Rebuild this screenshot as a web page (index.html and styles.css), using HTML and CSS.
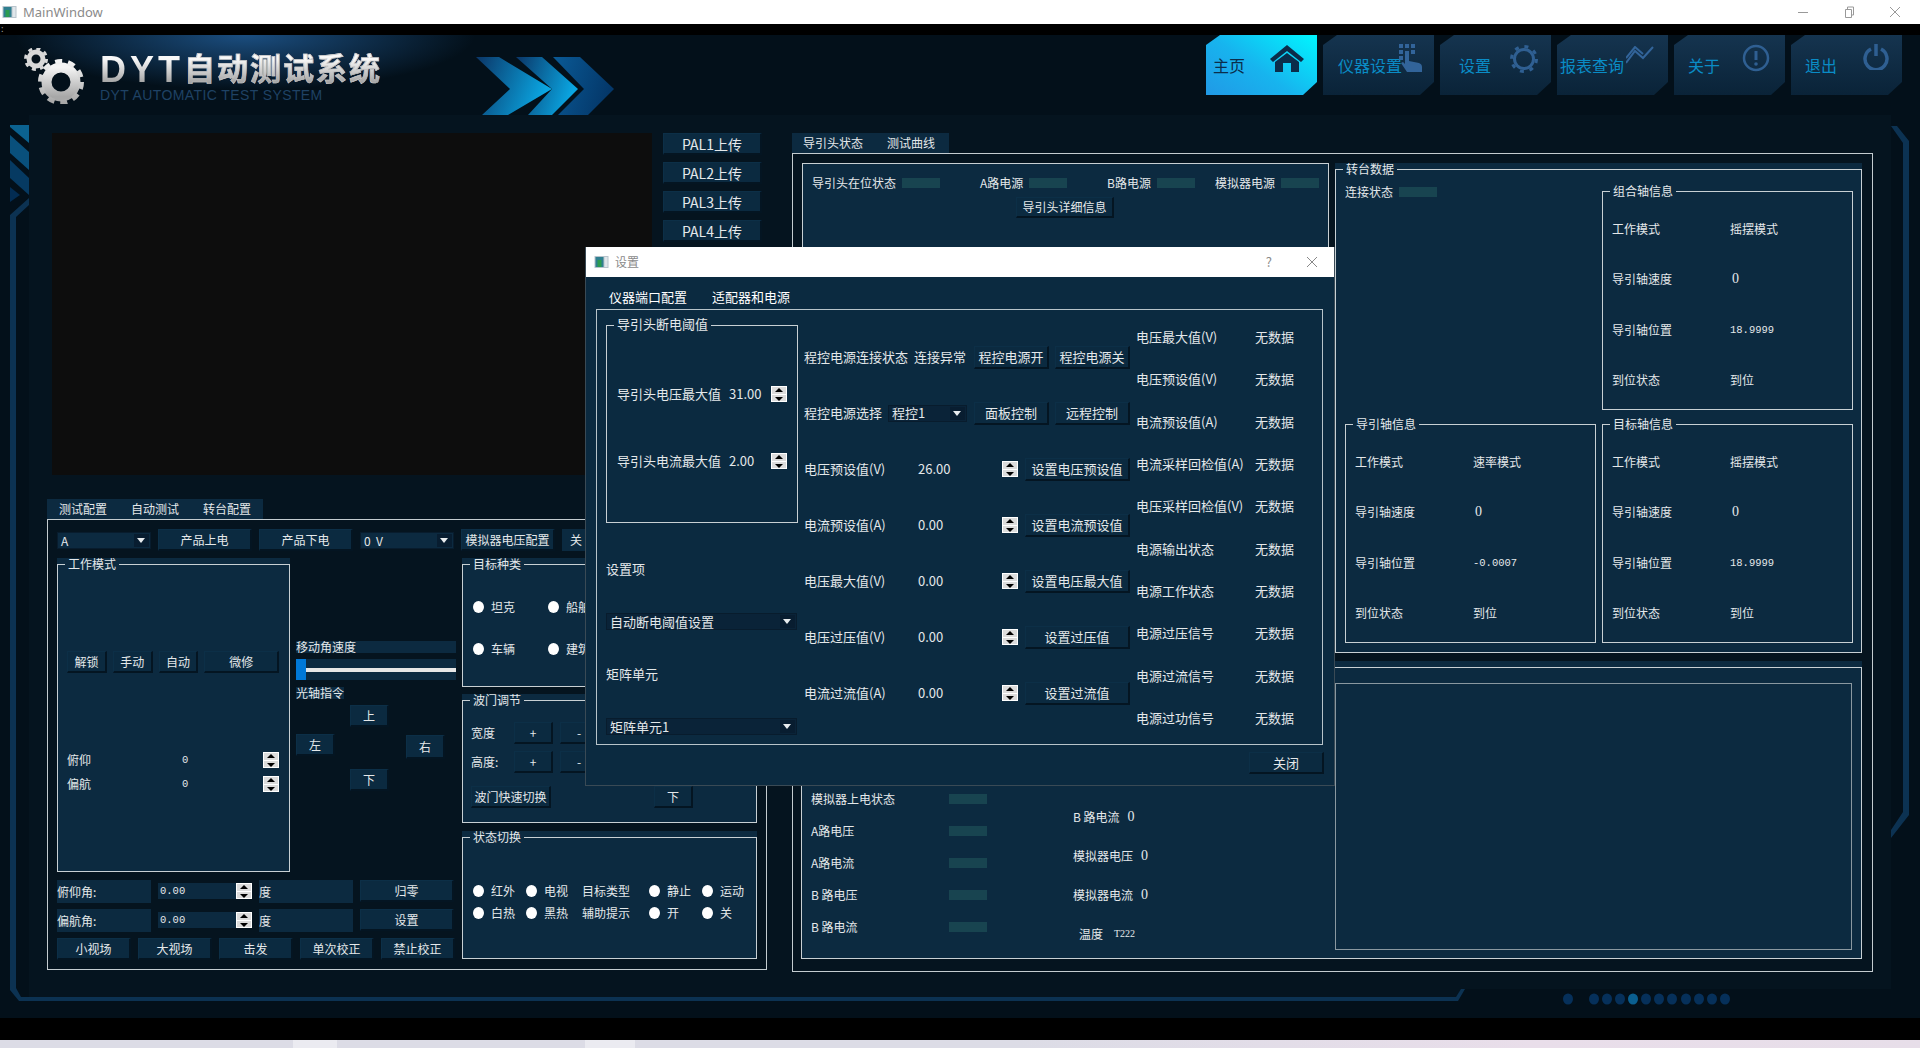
FILE: index.html
```html
<!DOCTYPE html>
<html lang="zh">
<head>
  <meta charset="UTF-8" />
  <title>MainWindow</title>
  <link rel="stylesheet" href="styles.css">
</head>
<body>
  <div class="page">
    <div class="titlebar">
      <svg class="win-icon" viewBox="0 0 14 12"><rect width="14" height="12" fill="#b8c4cc"/><rect x="1" y="1" width="8" height="10" fill="#2f7f8f"/><rect x="3" y="4" width="4" height="7" fill="#2c9c4f"/><rect x="10" y="1" width="3" height="10" fill="#dfe6ea"/></svg>
      <span class="win-title">MainWindow</span>
      <div class="win-ctrls">
        <svg viewBox="0 0 12 12"><path d="M1 6.5h10" stroke="#999" fill="none"/></svg>
        <svg viewBox="0 0 12 12"><path d="M2.5 3.5h6v8h-6zM4.5 3.5v-2.500h6v8h-2" stroke="#999" fill="none"/></svg>
        <svg viewBox="0 0 12 12"><path d="M1 1l10 10M11 1L1 11" stroke="#999" fill="none"/></svg>
      </div>
    </div>
    <div class="menubar">:</div>

    <div class="app">
      <svg class="deco" viewBox="0 35 1920 983">
        <rect x="29" y="115" width="1862" height="874" fill="#05141f"/>
        <polygon points="29,989 29,1001 1456,1001 1465,989" fill="#05141f"/>
        <polygon points="10,125 29,125 29,143 10,127" fill="#0b6290"/>
        <polygon points="10,135 29,152 29,170 10,153" fill="#09507c"/>
        <polygon points="10,160 29,178 29,195 10,178" fill="#063a62"/>
        <polygon points="10,187 20,195 10,202" fill="#032c52"/>
        <polygon points="29,198 29,205 16,217 16,988 21,997 1456,997 1461,989 1465,989 1458,1001 19,1001 10,990 10,215" fill="#0c3252"/>
        <polygon points="1891,126 1897,126 1909,141 1909,815 1891,838 1891,830 1903,812 1903,143" fill="#0c3252"/>
        <g fill="#06305a">
          <ellipse cx="1568" cy="999" rx="5" ry="5.500"/><ellipse cx="1594" cy="999" rx="5" ry="5.500"/><ellipse cx="1607" cy="999" rx="5" ry="5.500"/><ellipse cx="1620" cy="999" rx="5" ry="5.500"/>
          <ellipse cx="1633" cy="999" rx="5" ry="5.500" fill="#0a5f90"/>
          <ellipse cx="1646" cy="999" rx="5" ry="5.500"/><ellipse cx="1659" cy="999" rx="5" ry="5.500"/><ellipse cx="1672" cy="999" rx="5" ry="5.500"/><ellipse cx="1686" cy="999" rx="5" ry="5.500"/><ellipse cx="1699" cy="999" rx="5" ry="5.500"/><ellipse cx="1712" cy="999" rx="5" ry="5.500"/><ellipse cx="1725" cy="999" rx="5" ry="5.500"/>
        </g>
      </svg>

      <header class="header">
        <svg class="gears" viewBox="0 0 62 56">
          <defs><linearGradient id="metal" x1="0" y1="0" x2="0" y2="1"><stop offset="0" stop-color="#f4f4f4"/><stop offset="1" stop-color="#a8a8a8"/></linearGradient></defs>
          <circle cx="37" cy="34" r="14.500" fill="none" stroke="url(#metal)" stroke-width="10"/>
          <circle cx="37" cy="34" r="20.500" fill="none" stroke="url(#metal)" stroke-width="5" stroke-dasharray="7 5.880"/>
          <circle cx="12" cy="11" r="7" fill="none" stroke="#d8d8d8" stroke-width="5"/>
          <circle cx="12" cy="11" r="10.500" fill="none" stroke="#d8d8d8" stroke-width="3" stroke-dasharray="4 4.250"/>
        </svg>
        <div class="brand">
          <div class="brand-name">DYT<span>自动测试系统</span></div>
          <div class="brand-sub">DYT AUTOMATIC TEST SYSTEM</div>
        </div>
        <svg class="chevrons" viewBox="0 0 138 58">
          <defs>
            <linearGradient id="chev" x1="0" y1="0" x2="1" y2="0.300"><stop offset="0" stop-color="#0b3566"/><stop offset="1" stop-color="#0aa6e2"/></linearGradient>
            <linearGradient id="chev-back" x1="0" y1="0" x2="1" y2="0.300"><stop offset="0" stop-color="#0a5a96"/><stop offset="1" stop-color="#04386a"/></linearGradient>
          </defs>
          <polygon points="77,0 104,0 138,32 112,58 82,58 108,32" fill="url(#chev-back)"/>
          <polygon points="40,0 66,0 102,32 76,58 52,58 76,32" fill="url(#chev)"/>
          <polygon points="0,0 23,0 76,32 32,58 6,58 34,32" fill="url(#chev)"/>
        </svg>
        <nav class="nav">
          <a class="nav-btn active t-home">主页
            <svg class="nav-icon i-home" viewBox="0 0 36 28"><path d="M18 1L1 15l3 3L18 7l14 11 3-3z" fill="#0b2d4a"/><path d="M6 18l12-9 12 9v10h-8v-9h-8v9H6z" fill="#0b2d4a"/></svg>
          </a>
          <a class="nav-btn t-inst">仪器设置
            <svg class="nav-icon i-hand" viewBox="0 0 24 28"><g fill="#32649a"><rect x="1" y="0" width="4" height="4"/><rect x="7" y="0" width="4" height="4"/><rect x="13" y="0" width="4" height="4"/><rect x="1" y="6" width="4" height="4"/><rect x="13" y="6" width="4" height="4"/><rect x="1" y="12" width="4" height="4"/><path d="M7 7h4v10l10 2q3 1 3 4v5H9l-6-9 2-1 2 2z"/></g></svg>
          </a>
          <a class="nav-btn t-set">设置
            <svg class="nav-icon i-gear" viewBox="0 0 30 32"><circle cx="15" cy="16" r="9.500" fill="none" stroke="#2f5f92" stroke-width="3"/><circle cx="15" cy="16" r="12.500" fill="none" stroke="#2f5f92" stroke-width="3" stroke-dasharray="4 5.820"/></svg>
          </a>
          <a class="nav-btn t-rep">报表查询
            <svg class="nav-icon i-chart" viewBox="0 0 28 18"><path d="M0 17L9 5l8 7L27 1M0 12L9 1l8 7" fill="none" stroke="#32649a" stroke-width="2"/></svg>
          </a>
          <a class="nav-btn t-about">关于
            <svg class="nav-icon i-alert" viewBox="0 0 28 28"><circle cx="14" cy="14" r="12" fill="none" stroke="#2f5f92" stroke-width="2.500"/><path d="M14 7v9" stroke="#2f5f92" stroke-width="3"/><circle cx="14" cy="20" r="1.800" fill="#2f5f92"/></svg>
          </a>
          <a class="nav-btn t-exit">退出
            <svg class="nav-icon i-power" viewBox="0 0 26 26"><path d="M8 5a11 11 0 1 0 10 0" fill="none" stroke="#2f5f92" stroke-width="3.500"/><path d="M13 0v12" stroke="#2f5f92" stroke-width="3.500"/></svg>
          </a>
        </nav>
      </header>

      <main class="body">
        <section class="left-col">
          <div class="video-row">
            <div class="video"></div>
            <div class="pal-col">
              <button class="btn pal">PAL1上传</button>
              <button class="btn pal">PAL2上传</button>
              <button class="btn pal">PAL3上传</button>
              <button class="btn pal">PAL4上传</button>
            </div>
          </div>

          <div class="tabs tabs-left"><span>测试配置</span><span>自动测试</span><span>转台配置</span></div>
          <div class="tab-box cfg-box">
            <div class="cfg-top">
              <div class="combo combo-light"><span>A</span><i></i></div>
              <button class="btn">产品上电</button>
              <button class="btn">产品下电</button>
              <div class="combo combo-light"><span>0&nbsp;&nbsp;V</span><i></i></div>
              <button class="btn">模拟器电压配置</button>
              <div class="btn off-box">关</div>
            </div>
            <div class="cfg-main">
              <div class="cfg-left">
                <div class="cfg-upper">
                  <div class="group mode-group">
                    <fieldset>
                      <legend>工作模式</legend>
                      <div class="mode-btns">
                        <button class="btn">解锁</button>
                        <button class="btn">手动</button>
                        <button class="btn">自动</button>
                        <button class="btn wide">微修</button>
                      </div>
                      <div class="mode-row"><span class="mode-label">俯仰</span><span class="small-num">0</span><div class="spin"><i></i><i></i></div></div>
                      <div class="mode-row"><span class="mode-label">偏航</span><span class="small-num">0</span><div class="spin"><i></i><i></i></div></div>
                    </fieldset>
                  </div>
                  <div class="axis-col">
                    <div class="strip-label">移动角速度</div>
                    <div class="slider"><i class="slider-handle"></i><i class="slider-groove"></i></div>
                    <div class="strip-label short">光轴指令</div>
                    <div class="dpad">
                      <button class="btn d-up">上</button>
                      <button class="btn d-left">左</button>
                      <button class="btn d-right">右</button>
                      <button class="btn d-down">下</button>
                    </div>
                  </div>
                </div>
                <div class="angle-row">
                  <div class="strip-cell">俯仰角:</div>
                  <div class="spin-field"><span class="small-num">0.00</span><div class="spin"><i></i><i></i></div></div>
                  <div class="strip-cell">度</div>
                  <button class="btn">归零</button>
                </div>
                <div class="angle-row">
                  <div class="strip-cell">偏航角:</div>
                  <div class="spin-field"><span class="small-num">0.00</span><div class="spin"><i></i><i></i></div></div>
                  <div class="strip-cell">度</div>
                  <button class="btn">设置</button>
                </div>
                <div class="shot-row">
                  <button class="btn">小视场</button>
                  <button class="btn">大视场</button>
                  <button class="btn">击发</button>
                  <button class="btn">单次校正</button>
                  <button class="btn">禁止校正</button>
                </div>
              </div>
              <div class="cfg-right">
                <div class="group target-group">
                  <fieldset>
                    <legend>目标种类</legend>
                    <div class="target-grid">
                      <label class="radio"><i></i>坦克</label>
                      <label class="radio"><i></i>船舶</label>
                      <label class="radio"><i></i>车辆</label>
                      <label class="radio"><i></i>建筑</label>
                    </div>
                  </fieldset>
                </div>
                <div class="group gate-group">
                  <fieldset>
                    <legend>波门调节</legend>
                    <div class="gate-row"><span class="gate-label">宽度</span><button class="btn">+</button><button class="btn">-</button></div>
                    <div class="gate-row"><span class="gate-label">高度:</span><button class="btn">+</button><button class="btn">-</button></div>
                    <div class="gate-row gate-last"><button class="btn gate-fast">波门快速切换</button><button class="btn gate-down">下</button></div>
                  </fieldset>
                </div>
                <div class="group state-group">
                  <fieldset>
                    <legend>状态切换</legend>
                    <div class="state-grid">
                      <label class="radio"><i></i>红外</label>
                      <label class="radio"><i></i>电视</label>
                      <span>目标类型</span>
                      <label class="radio"><i></i>静止</label>
                      <label class="radio"><i></i>运动</label>
                      <label class="radio"><i></i>白热</label>
                      <label class="radio"><i></i>黑热</label>
                      <span>辅助提示</span>
                      <label class="radio"><i></i>开</label>
                      <label class="radio"><i></i>关</label>
                    </div>
                  </fieldset>
                </div>
              </div>
            </div>
          </div>
        </section>

        <section class="right-col">
          <div class="tabs tabs-right"><span>导引头状态</span><span>测试曲线</span></div>
          <div class="tab-box status-box">
            <div class="status-top">
              <div class="seeker-box">
                <div class="seeker-row">
                  <div class="lamp-cell cell-a"><span>导引头在位状态</span><i class="lamp"></i></div>
                  <div class="lamp-cell cell-b"><span>A路电源</span><i class="lamp"></i></div>
                  <div class="lamp-cell cell-c"><span>B路电源</span><i class="lamp"></i></div>
                  <div class="lamp-cell"><span>模拟器电源</span><i class="lamp"></i></div>
                </div>
                <button class="btn seeker-btn">导引头详细信息</button>
              </div>
              <div class="group turret-group">
                <fieldset>
                  <legend>转台数据</legend>
                  <div class="turret-grid">
                    <div class="lamp-cell"><span>连接状态</span><i class="lamp"></i></div>
                    <fieldset class="axis">
                      <legend>组合轴信息</legend>
                      <div class="axis-grid">
                        <span>工作模式</span><span>摇摆模式</span>
                        <span>导引轴速度</span><span class="big-zero">0</span>
                        <span>导引轴位置</span><span class="small-num">18.9999</span>
                        <span>到位状态</span><span>到位</span>
                      </div>
                    </fieldset>
                    <fieldset class="axis">
                      <legend>导引轴信息</legend>
                      <div class="axis-grid">
                        <span>工作模式</span><span>速率模式</span>
                        <span>导引轴速度</span><span class="big-zero">0</span>
                        <span>导引轴位置</span><span class="small-num">-0.0007</span>
                        <span>到位状态</span><span>到位</span>
                      </div>
                    </fieldset>
                    <fieldset class="axis">
                      <legend>目标轴信息</legend>
                      <div class="axis-grid">
                        <span>工作模式</span><span>摇摆模式</span>
                        <span>导引轴速度</span><span class="big-zero">0</span>
                        <span>导引轴位置</span><span class="small-num">18.9999</span>
                        <span>到位状态</span><span>到位</span>
                      </div>
                    </fieldset>
                  </div>
                </fieldset>
              </div>
            </div>
            <div class="group power-group">
              <div class="power-box">
                <div class="power-col1">
                  <div class="power-row"><span>模拟器上电状态</span><i class="lamp"></i></div>
                  <div class="power-row"><span>A路电压</span><i class="lamp"></i></div>
                  <div class="power-row"><span>A路电流</span><i class="lamp"></i></div>
                  <div class="power-row"><span>B 路电压</span><i class="lamp"></i></div>
                  <div class="power-row"><span>B 路电流</span><i class="lamp"></i></div>
                </div>
                <div class="power-col2">
                  <div class="read-row">B 路电流<span class="big-zero">0</span></div>
                  <div class="read-row">模拟器电压<span class="big-zero">0</span></div>
                  <div class="read-row">模拟器电流<span class="big-zero">0</span></div>
                  <div class="read-row temp-row">温度<span class="temp-val">T222</span></div>
                </div>
                <div class="plot-frame"></div>
              </div>
            </div>
          </div>
        </section>
      </main>
    </div>

    <div class="blackbar"></div>
    <div class="taskbar"><i class="tb-a"></i><i class="tb-light"></i><i class="tb-b"></i><i class="tb-light2"></i><i class="tb-c"></i><span class="clock">16:40</span></div>

    <!-- 设置 dialog, floats over the main window -->
    <div class="dialog">
      <div class="dlg-title">
        <svg class="win-icon" viewBox="0 0 14 12"><rect width="14" height="12" fill="#b8c4cc"/><rect x="1" y="1" width="8" height="10" fill="#2f7f8f"/><rect x="3" y="4" width="4" height="7" fill="#2c9c4f"/><rect x="10" y="1" width="3" height="10" fill="#dfe6ea"/></svg>
        <span class="dlg-name">设置</span>
        <span class="dlg-help">?</span>
        <svg class="dlg-close" viewBox="0 0 12 12"><path d="M1 1l10 10M11 1L1 11" stroke="#888" fill="none"/></svg>
      </div>
      <div class="dlg-tabs"><span>仪器端口配置</span><span>适配器和电源</span></div>
      <div class="dlg-frame">
        <div class="dlg-left">
          <fieldset class="limit-group">
            <legend>导引头断电阈值</legend>
            <div class="limit-row first"><span class="limit-label">导引头电压最大值</span><span class="limit-val">31.00</span><div class="spin"><i></i><i></i></div></div>
            <div class="limit-row"><span class="limit-label">导引头电流最大值</span><span class="limit-val">2.00</span><div class="spin"><i></i><i></i></div></div>
          </fieldset>
          <div class="left-label">设置项</div>
          <div class="combo combo-wide"><span>自动断电阈值设置</span><i></i></div>
          <div class="left-label">矩阵单元</div>
          <div class="combo combo-wide"><span>矩阵单元1</span><i></i></div>
        </div>
        <div class="dlg-mid">
          <div class="mid-row"><span class="w-conn">程控电源连接状态</span><span class="w-state">连接异常</span><button class="btn b75">程控电源开</button><button class="btn b75">程控电源关</button></div>
          <div class="mid-row"><span class="w-sel">程控电源选择</span><div class="combo combo-sel"><span>程控1</span><i></i></div><button class="btn b75">面板控制</button><button class="btn b75">远程控制</button></div>
          <div class="mid-row"><span class="w-name">电压预设值(V)</span><span class="w-val">26.00</span><div class="spin"><i></i><i></i></div><button class="btn b105">设置电压预设值</button></div>
          <div class="mid-row"><span class="w-name">电流预设值(A)</span><span class="w-val">0.00</span><div class="spin"><i></i><i></i></div><button class="btn b105">设置电流预设值</button></div>
          <div class="mid-row"><span class="w-name">电压最大值(V)</span><span class="w-val">0.00</span><div class="spin"><i></i><i></i></div><button class="btn b105">设置电压最大值</button></div>
          <div class="mid-row"><span class="w-name">电压过压值(V)</span><span class="w-val">0.00</span><div class="spin"><i></i><i></i></div><button class="btn b105">设置过压值</button></div>
          <div class="mid-row"><span class="w-name">电流过流值(A)</span><span class="w-val">0.00</span><div class="spin"><i></i><i></i></div><button class="btn b105">设置过流值</button></div>
        </div>
        <div class="dlg-right">
          <span>电压最大值(V)</span><span>无数据</span>
          <span>电压预设值(V)</span><span>无数据</span>
          <span>电流预设值(A)</span><span>无数据</span>
          <span>电流采样回检值(A)</span><span>无数据</span>
          <span>电压采样回检值(V)</span><span>无数据</span>
          <span>电源输出状态</span><span>无数据</span>
          <span>电源工作状态</span><span>无数据</span>
          <span>电源过压信号</span><span>无数据</span>
          <span>电源过流信号</span><span>无数据</span>
          <span>电源过功信号</span><span>无数据</span>
        </div>
      </div>
      <div class="dlg-foot"><button class="btn b75">关闭</button></div>
    </div>
  </div>
</body>
</html>
```

FILE: styles.css
```css
* { box-sizing: border-box; }

html, body {
  margin: 0;
  padding: 0;
  width: 1920px;
  height: 1048px;
  overflow: hidden;
  background: #000;
}

body {
  font-family: "Noto Sans CJK SC", "Liberation Mono", sans-serif;
  font-size: 12px;
  line-height: 14px;
  color: #e4e8ea;
}

.page { position: relative; width: 1920px; height: 1048px; overflow: hidden; }

button { font: inherit; color: inherit; padding: 0; }
fieldset { margin: 0; min-width: 0; }
i { display: block; }

/* window chrome */
.titlebar {
  height: 24px;
  background: #fff;
  display: flex;
  align-items: center;
  padding-left: 2px;
  color: #8a8a8a;
}
.win-icon { width: 15px; height: 12px; flex: none; }
.win-title { font-family: "Noto Sans", sans-serif; font-size: 13px; margin-left: 6px; }
.win-ctrls { margin-left: auto; display: flex; gap: 34px; padding-right: 19px; }
.win-ctrls svg { width: 12px; height: 12px; }

.menubar { height: 11px; background: #000; color: #999; font-size: 9px; line-height: 10px; padding-left: 1px; }

.blackbar { height: 22px; background: #000; }
.taskbar { height: 8px; display: flex; position: relative; overflow: hidden; background: #dcdce6; }
.tb-a { width: 293px; background: #dcdce6; }
.tb-light { width: 44px; background: #ebebf1; }
.tb-b { width: 248px; background: #dcdce6; }
.tb-light2 { width: 50px; background: #ebebf1; }
.tb-c { flex: 1; background: linear-gradient(90deg, #dcdce6 0%, #dcdce6 30%, #e9deea 70%, #e7dee9 100%); }
.clock { position: absolute; left: 1814px; top: 5px; font-family: "Noto Sans", sans-serif; font-size: 11px; color: #222; }

/* main window */
.app {
  position: relative;
  height: 983px;
  background: #03101a;
}
.deco { position: absolute; left: 0; top: 0; width: 1920px; height: 983px; }

.header {
  position: relative;
  height: 80px;
  display: flex;
  align-items: flex-start;
  background: radial-gradient(ellipse 230px 55px at 245px 0, #1b4e80 0%, rgba(27, 78, 128, 0) 100%);
}
.gears { width: 62px; height: 56px; margin: 13px 0 0 24px; flex: none; }
.brand { margin: 17px 0 0 14px; width: 290px; flex: none; }
.brand-name {
  font-family: "Liberation Sans", "Noto Sans CJK SC", sans-serif;
  font-weight: bold;
  font-size: 36px;
  line-height: 36px;
  height: 36px;
  letter-spacing: 4px;
  white-space: nowrap;
  background: linear-gradient(180deg, #f8f8f8 20%, #a4a4a4 85%);
  -webkit-background-clip: text;
  background-clip: text;
  color: transparent;
}
.brand-name span {
  font-family: "Noto Sans CJK SC", sans-serif;
  font-size: 31px;
  letter-spacing: 2px;
  vertical-align: 2px;
  line-height: 30px;
  -webkit-text-stroke: 0.6px #c4c4c4;
}
.brand-sub {
  font-family: "Liberation Sans", sans-serif;
  font-size: 14px;
  line-height: 14px;
  letter-spacing: 0.400px;
  color: #1f4264;
  white-space: nowrap;
}
.chevrons { width: 138px; height: 58px; margin: 22px 0 0 86px; flex: none; }

.nav { margin-left: auto; display: flex; gap: 6px; padding-right: 18px; }
.nav-btn {
  position: relative;
  width: 111px;
  height: 60px;
  display: flex;
  align-items: center;
  font-family: "Noto Sans CJK SC", sans-serif;
  font-size: 16px;
  color: #0a8cc6;
  background: linear-gradient(180deg, #15344f 0%, #0a2338 100%);
  clip-path: polygon(14px 0, 100% 0, 100% calc(100% - 13px), calc(100% - 14px) 100%, 0 100%, 0 10px);
}
.nav-btn.active {
  color: #0b2d4a;
  background: linear-gradient(215deg, #00f6ff 0%, #17b4ee 55%, #2199e6 100%);
}
.t-home { padding-left: 7px; }
.t-inst { padding-left: 15px; }
.t-set { padding-left: 19px; }
.t-rep { padding-left: 3px; }
.t-about { padding-left: 14px; }
.t-exit { padding-left: 14px; }

.nav-icon { position: absolute; }
.i-home { width: 36px; height: 28px; left: 63px; top: 9px; }
.i-hand { width: 24px; height: 28px; left: 75px; top: 9px; }
.i-gear { width: 30px; height: 32px; left: 69px; top: 8px; }
.i-chart { width: 28px; height: 18px; left: 69px; top: 11px; }
.i-alert { width: 28px; height: 28px; left: 68px; top: 9px; }
.i-power { width: 26px; height: 26px; left: 72px; top: 9px; }

.body {
  position: relative;
  display: flex;
  gap: 25px;
  padding: 18px 0 0 47px;
}
.left-col { width: 720px; flex: none; }
.right-col { width: 1081px; flex: none; }

.video-row { display: flex; gap: 11px; padding-left: 5px; height: 366px; }
.video { width: 600px; height: 342px; background: #0d0d0d; }
.pal-col { display: flex; flex-direction: column; gap: 7px; width: 99px; }

/* buttons */
.btn {
  display: flex;
  align-items: center;
  justify-content: center;
  height: 22px;
  background: #0b2a40;
  border: 1px solid #0c2f47;
  border-right: 2px solid #041522;
  border-bottom: 2px solid #041522;
  color: #e4e8ea;
  white-space: nowrap;
}
.btn.pal { font-size: 14px; }

/* tabs */
.tabs { height: 20px; background: #0c2a40; display: flex; gap: 24px; align-items: center; }
.tabs-left { width: 216px; padding-left: 12px; }
.tabs-right { width: 157px; padding-left: 11px; }

.tab-box { border: 1px solid #c4ccd0; }
.cfg-box { width: 720px; height: 451px; padding: 9px 9px 0; overflow: hidden; }
.status-box { width: 1081px; height: 819px; padding: 9px 9px 0 9px; }

.cfg-top { display: flex; gap: 7px; height: 22px; align-items: flex-start; }
.cfg-top > * { width: 94px; flex: none; }
.off-box { border: 0; justify-content: flex-start; padding-left: 8px; }
.cfg-top .combo { margin-top: 3px; }

/* combos and spin boxes */
.combo {
  height: 17px;
  display: flex;
  align-items: center;
  justify-content: space-between;
  background: #0a2338;
  border: 1px solid #081c2d;
  padding-left: 3px;
  white-space: nowrap;
}
.combo-light { background: #0c2a40; }
.combo i {
  width: 15px;
  height: 13px;
  margin-right: 1px;
  background: #081d30;
  position: relative;
}
.combo i::after {
  content: "";
  position: absolute;
  left: 3px;
  top: 4px;
  border: 4px solid transparent;
  border-top: 5px solid #e8ecee;
  border-bottom: 0;
}
.combo-wide { width: 191px; }
.combo-sel { width: 79px; margin-right: 7px; }

.spin {
  width: 16px;
  height: 16px;
  flex: none;
  background: #fff;
  border: 1px solid #fff;
  display: flex;
  flex-direction: column;
  gap: 1px;
}
.spin i { flex: 1; background: #dcdcdc; position: relative; }
.spin i::after {
  content: "";
  position: absolute;
  left: 3px;
  top: 1px;
  border: 4px solid transparent;
  border-top: 0;
  border-bottom: 4px solid #000;
}
.spin i + i::after { border-bottom: 0; border-top: 4px solid #000; top: 2px; }

/* group boxes: the wrapper paints the stripe behind the legend */
.group { background: #0c2a40; }
.group > fieldset,
.axis,
.limit-group {
  border: 1px solid #c8d0d4;
  padding: 0;
}
legend {
  position: relative;
  top: -1px;
  margin-left: 7px;
  padding: 0 3px;
  line-height: 13px;
  font-size: 12px;
}
.mode-group legend,
.turret-group > fieldset > legend,
.axis > legend { margin-left: -2px; }
.target-group legend,
.state-group legend { margin-left: -3px; }
.gate-group legend { margin-left: -1px; }

.cfg-main { display: flex; gap: 6px; margin-top: 7px; }
.cfg-left { width: 399px; flex: none; }
.cfg-right { width: 295px; flex: none; display: flex; flex-direction: column; }

.cfg-upper { display: flex; gap: 6px; height: 322px; }
.mode-group { width: 233px; height: 314px; }
.mode-group fieldset { height: 314px; padding: 0 10px 0 9px; }
.mode-btns { display: flex; gap: 6px; margin-top: 80px; }
.mode-btns .btn { width: 40px; }
.mode-btns .wide { width: 75px; }
.mode-row { display: flex; align-items: center; height: 24px; }
.mode-btns + .mode-row { margin-top: 75px; }
.mode-label { width: 115px; }
.mode-row .small-num { width: 81px; }
.small-num { font-family: "Liberation Mono", monospace; font-size: 10.500px; }

.axis-col { width: 160px; padding-top: 83px; }
.strip-label { height: 12px; line-height: 12px; background: #0c2a40; white-space: nowrap; }
.strip-label.short { width: 48px; margin-top: 7px; }
.slider { height: 21px; margin-top: 6px; background: #0c2a40; display: flex; align-items: center; }
.slider-handle { width: 10px; height: 21px; background: #0078d7; flex: none; }
.slider-groove { flex: 1; height: 4px; background: #e6e6e6; }
.dpad {
  display: grid;
  grid-template-columns: 39px 15px 39px 17px 39px;
  grid-template-rows: 22px 7px 26px 9px 22px;
  margin-top: 6px;
}
.d-up { grid-column: 3; grid-row: 1; }
.d-left { grid-column: 1; grid-row: 3; }
.d-right { grid-column: 5; grid-row: 3; height: 24px; margin-top: 1px; }
.d-down { grid-column: 3; grid-row: 5; }

.angle-row { display: flex; gap: 7px; height: 23px; margin-bottom: 6px; }
.strip-cell { width: 94px; flex: none; background: #0c2a40; display: flex; align-items: center; }
.angle-row .btn { width: 94px; flex: none; }
.spin-field {
  width: 94px;
  height: 16px;
  flex: none;
  margin-top: 3px;
  display: flex;
  align-items: center;
  justify-content: space-between;
  background: #0c2a40;
  padding-left: 2px;
}
.shot-row { display: flex; gap: 7px; }
.shot-row .btn { width: 74px; flex: none; }

.target-group { height: 129px; }
.target-group fieldset { height: 129px; padding: 0 0 0 10px; }
.target-grid { display: grid; grid-template-columns: 75px 75px; grid-auto-rows: 24px; row-gap: 18px; margin-top: 24px; }
.radio { display: flex; align-items: center; gap: 7px; white-space: nowrap; }
.radio i { width: 11px; height: 12px; background: #fff; border-radius: 50%; flex: none; }

.gate-group { height: 129px; margin-top: 7px; }
.gate-group fieldset { height: 129px; padding: 0 0 0 8px; }
.gate-row { display: flex; gap: 7px; margin-top: 7px; height: 22px; }
.gate-row:first-of-type { margin-top: 15px; }
.gate-row .btn { width: 39px; }
.gate-label { width: 36px; display: flex; align-items: center; }
.gate-last { margin-top: 13px; }
.gate-row .gate-fast { width: 80px; }
.gate-row .gate-down { margin-left: 96px; }

.state-group { height: 128px; margin-top: 8px; }
.state-group fieldset { height: 128px; padding: 0 0 0 10px; }
.state-grid {
  display: grid;
  grid-template-columns: 53px 56px 67px 53px 1fr;
  grid-auto-rows: 16px;
  row-gap: 6px;
  margin-top: 39px;
  align-items: center;
}

/* right panel */
.status-top { display: flex; gap: 6px; height: 498px; }
.seeker-box {
  width: 527px;
  height: 490px;
  background: #0c2a40;
  border: 1px solid #c8d0d4;
  padding: 12px 0 0 9px;
}
.seeker-row { display: grid; grid-template-columns: 168px 127px 108px 1fr; }
.lamp-cell { display: flex; align-items: center; gap: 6px; white-space: nowrap; }
.lamp { width: 38px; height: 10px; background: #184450; flex: none; }
.seeker-btn { width: 98px; margin: 7px 0 0 204px; height: 21px; }

.turret-group { width: 527px; height: 490px; }
.turret-group > fieldset { height: 490px; padding: 0 9px; }
.turret-grid {
  display: grid;
  grid-template-columns: 251px 251px;
  grid-template-rows: 225px 225px;
  column-gap: 6px;
  row-gap: 8px;
  margin-top: 9px;
}
.turret-grid > .lamp-cell { align-items: flex-start; }
.turret-grid > .lamp-cell .lamp { margin-top: 2px; }
.axis { height: 225px; padding: 0 0 0 9px; }
.axis-grid {
  display: grid;
  grid-template-columns: 118px 1fr;
  grid-auto-rows: 50.300px;
  align-items: center;
  margin-top: 6px;
}
.big-zero { font-family: "Liberation Serif", serif; font-size: 14px; padding-left: 2px; }

.power-group { width: 1061px; height: 298px; padding-top: 6px; margin-left: -1px; }
.power-box {
  height: 292px;
  border: 1px solid #c8d0d4;
  display: flex;
  padding: 15px 9px 8px 9px;
}
.power-col1 { width: 262px; flex: none; padding-top: 100px; }
.power-row { height: 32px; display: flex; align-items: center; white-space: nowrap; }
.power-row span { width: 138px; }
.power-col2 { width: 262px; flex: none; padding-top: 114px; }
.read-row { height: 39px; display: flex; align-items: center; gap: 6px; white-space: nowrap; }
.temp-row { padding-left: 6px; gap: 11px; }
.temp-val { font-family: "Liberation Serif", serif; font-size: 10px; }
.plot-frame { flex: 1; border: 1px solid #8a98a0; background: #0c2a40; }

/* settings dialog */
.dialog {
  position: absolute;
  left: 585px;
  top: 247px;
  width: 750px;
  height: 539px;
  background: #0b2a40;
  border: 1px solid #3a4a55;
  border-top: 0;
  font-size: 13px;
}
.dlg-title {
  height: 30px;
  background: #fff;
  display: flex;
  align-items: center;
  padding-left: 8px;
  color: #8a8a8a;
}
.dlg-name { margin-left: 6px; font-size: 12px; }
.dlg-help { margin-left: auto; margin-right: 34px; font-size: 13px; }
.dlg-close { width: 12px; height: 12px; margin-right: 16px; }
.dlg-tabs { display: flex; gap: 25px; height: 18px; margin-top: 13px; margin-bottom: 1px; padding-left: 23px; align-items: flex-start; color: #fff; }
.dlg-frame {
  width: 727px;
  height: 436px;
  margin-left: 10px;
  border: 1px solid #b8c4ca;
  display: flex;
  padding-left: 9px;
}
.dlg-left { width: 192px; flex: none; padding-top: 9px; }
.limit-group { height: 204px; padding: 0; }
.limit-group legend { font-size: 13px; top: -2px; }
.limit-row { display: flex; align-items: center; height: 24px; margin-top: 43px; padding-left: 10px; }
.limit-row.first { margin-top: 50px; }
.limit-label { width: 112px; flex: none; white-space: nowrap; }
.limit-val { width: 42px; flex: none; }
.left-label { height: 16px; line-height: 16px; margin-top: 37px; }
.dlg-left .combo { margin-top: 37px; }
.dlg-left .limit-group + .left-label { margin-top: 38px; }
.dlg-left .combo + .left-label { margin-top: 36px; }
.dlg-left .left-label + .combo { margin-top: 36px; }

.dlg-mid { width: 326px; flex: none; margin-left: 6px; padding-top: 19px; }
.mid-row { height: 56px; display: flex; align-items: center; white-space: nowrap; }
.mid-row .btn { height: 23px; }
.w-conn { width: 110px; flex: none; }
.w-state { width: 60px; flex: none; }
.w-sel { width: 84px; flex: none; }
.w-name { width: 114px; flex: none; }
.w-val { width: 84px; flex: none; }
.b75 { width: 75px; flex: none; }
.b75 + .b75 { margin-left: 6px; }
.b105 { width: 105px; flex: none; margin-left: 7px; }

.dlg-right {
  margin-left: 6px;
  padding-top: 6px;
  display: grid;
  grid-template-columns: 119px 60px;
  grid-auto-rows: 42.330px;
  align-items: center;
  white-space: nowrap;
  align-content: start;
}
.dlg-foot { display: flex; justify-content: flex-end; margin-top: 7px; padding-right: 10px; }
```
